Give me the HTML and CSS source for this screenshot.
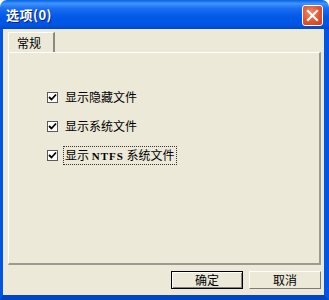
FILE: index.html
```html
<!DOCTYPE html>
<html>
<head>
<meta charset="utf-8">
<link rel="stylesheet" href="styles.css">
</head>
<body>
<div class="window">
  <div class="titlebar">
    <span class="title">选项(0)</span>
    <button class="close" aria-label="关闭">
      <svg width="13" height="13" viewBox="0 0 13 13"><path d="M2 2 L11 11 M11 2 L2 11" stroke="#fff" stroke-width="2.2" stroke-linecap="square"/></svg>
    </button>
  </div>
  <div class="frame">
    <div class="tabs">
      <div class="tab">常规</div>
    </div>
    <div class="panel">
      <label class="row"><span class="box"><svg width="9" height="9" viewBox="0 0 9 9"><path d="M1 4 L3.5 6.5 L8 1.5" fill="none" stroke="#000" stroke-width="1.8"/></svg></span><span class="lbl">显示隐藏文件</span></label>
      <label class="row"><span class="box"><svg width="9" height="9" viewBox="0 0 9 9"><path d="M1 4 L3.5 6.5 L8 1.5" fill="none" stroke="#000" stroke-width="1.8"/></svg></span><span class="lbl">显示系统文件</span></label>
      <label class="row"><span class="box"><svg width="9" height="9" viewBox="0 0 9 9"><path d="M1 4 L3.5 6.5 L8 1.5" fill="none" stroke="#000" stroke-width="1.8"/></svg></span><span class="lbl focus">显示 <span class="mono">NTFS</span> 系统文件</span></label>
    </div>
    <div class="buttons">
      <button class="btn default">确定</button>
      <button class="btn">取消</button>
    </div>
  </div>
</div>
</body>
</html>
```

FILE: styles.css
```css
html, body {
  margin: 0;
  padding: 0;
  background: #ffffff;
}
.window {
  width: 329px;
  height: 300px;
  display: flex;
  flex-direction: column;
  font-family: "Noto Sans CJK SC", "Liberation Sans", sans-serif;
  font-size: 12px;
  color: #000;
}
.titlebar {
  height: 29px;
  border-radius: 7px 7px 0 0;
  background: linear-gradient(to bottom, #0a5fe0 0%, #3d95ff 12%, #1a6cf2 30%, #0058e6 60%, #0055e5 85%, #0048c8 100%);
  display: flex;
  align-items: center;
  justify-content: space-between;
  padding: 0 6px 0 6px;
}
.title {
  color: #fff;
  font-weight: bold;
  font-size: 13px;
  letter-spacing: 0.5px;
  text-shadow: 1px 1px 0 #0a1f7a;
}
.close {
  width: 21px;
  height: 21px;
  padding: 0;
  border: 1px solid #fff;
  border-radius: 3px;
  background: radial-gradient(circle at 40% 35%, #f08a6a 0%, #e0542e 55%, #c8401c 100%);
  display: flex;
  align-items: center;
  justify-content: center;
  margin-top: 1px;
}
.frame {
  flex: 1;
  background: #ece9d8;
  border-left: 3px solid #0055e5;
  border-right: 5px solid #0055e5;
  border-bottom: 5px solid #0045c4;
  display: flex;
  flex-direction: column;
  padding: 3px 3px 0 5px;
}
.tabs {
  display: flex;
  height: 20px;
  position: relative;
  z-index: 1;
}
.tab {
  width: 47px;
  height: 20px;
  box-sizing: border-box;
  border-left: 1px solid #fff;
  border-top: 1px solid #fff;
  border-right: 2px solid #8a8a80;
  background: #ece9d8;
  padding-left: 8px;
  line-height: 19px;
  margin-bottom: -1px;
}
.panel {
  height: 213px;
  box-sizing: border-box;
  border-left: 1px solid #fff;
  border-top: 1px solid #fff;
  border-right: 2px solid #9a9a90;
  border-bottom: 2px solid #9a9a90;
  padding: 35px 0 0 38px;
  display: flex;
  flex-direction: column;
  gap: 11px;
}
.row {
  display: flex;
  align-items: center;
  height: 18px;
  gap: 5px;
}
.box {
  width: 11px;
  height: 11px;
  box-sizing: border-box;
  border: 1px solid #5a5a5a;
  background: #fff;
  display: flex;
  align-items: center;
  justify-content: center;
}
.lbl {
  line-height: 16px;
  padding: 0 1px;
  border: 1px solid transparent;
}
.focus {
  border: 1px dotted #333;
}
.mono {
  font-family: "Liberation Serif", serif;
  font-size: 11px;
  font-weight: bold;
  letter-spacing: 1px;
}
.buttons {
  display: flex;
  justify-content: flex-end;
  gap: 6px;
  padding-top: 6px;
  padding-right: 0;
}
.btn {
  width: 72px;
  height: 18px;
  box-sizing: border-box;
  font-family: "Noto Sans CJK SC", sans-serif;
  font-size: 12px;
  line-height: 14px;
  padding: 0;
  background: #ece9d8;
  border-top: 1px solid #fff;
  border-left: 1px solid #fff;
  border-right: 1px solid #7a7a70;
  border-bottom: 1px solid #7a7a70;
  color: #000;
}
.btn.default {
  border: 1px solid #000;
  box-shadow: inset 1px 1px 0 #fff, inset -1px -1px 0 #808080;
}
```
